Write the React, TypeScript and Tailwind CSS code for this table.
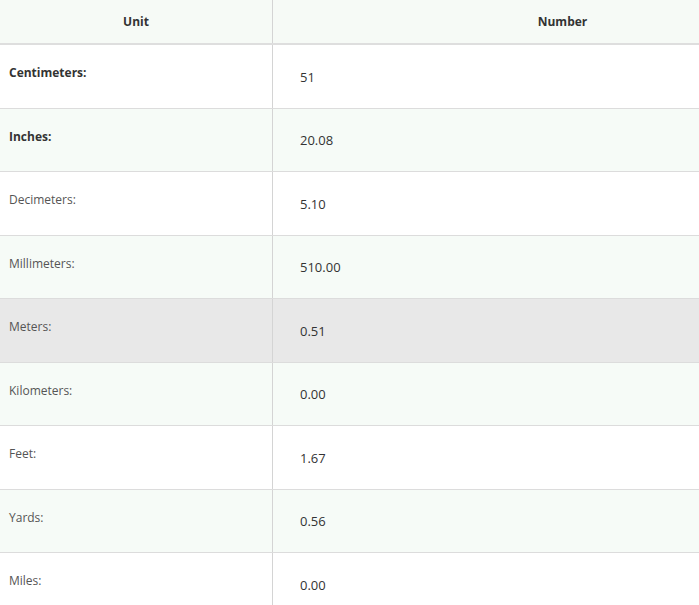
import React from "react";

const rows: { label: string; value: string; bold?: boolean; bg: string }[] = [
  { label: "Centimeters:", value: "51", bold: true, bg: "bg-white" },
  { label: "Inches:", value: "20.08", bold: true, bg: "bg-[#f6fbf7]" },
  { label: "Decimeters:", value: "5.10", bg: "bg-white" },
  { label: "Millimeters:", value: "510.00", bg: "bg-[#f6fbf7]" },
  { label: "Meters:", value: "0.51", bg: "bg-[#e8e8e8]" },
  { label: "Kilometers:", value: "0.00", bg: "bg-[#f6fbf7]" },
  { label: "Feet:", value: "1.67", bg: "bg-white" },
  { label: "Yards:", value: "0.56", bg: "bg-[#f6fbf7]" },
  { label: "Miles:", value: "0.00", bg: "bg-white" },
];

export default function App() {
  return (
    <div className="w-[699px] h-[605px] overflow-hidden bg-white font-['Open_Sans','Liberation_Sans',sans-serif]">
      <div className="w-[852px]">
        <div className="flex h-[45px] bg-[#f6faf6] border-b-2 border-[#dedede]">
          <div className="w-[273px] border-r border-[#d4d4d4] flex items-center justify-center text-[12px] font-bold text-[#333]">
            Unit
          </div>
          <div className="flex-1 flex items-center justify-center text-[12px] font-bold text-[#333]">
            Number
          </div>
        </div>
        {rows.map((r) => (
          <div key={r.label} className={`flex h-[63.5px] border-b border-[#dcdcdc] ${r.bg}`}>
            <div
              className={`w-[273px] border-r border-[#d4d4d4] pl-[9px] pt-[20px] text-[12px] leading-[16px] ${
                r.bold ? "font-bold text-[#333]" : "text-[#555]"
              }`}
            >
              {r.label}
            </div>
            <div className="flex-1 flex items-center pl-[27px] pt-[2px] text-[13px] text-[#333]">
              {r.value}
            </div>
          </div>
        ))}
      </div>
    </div>
  );
}
